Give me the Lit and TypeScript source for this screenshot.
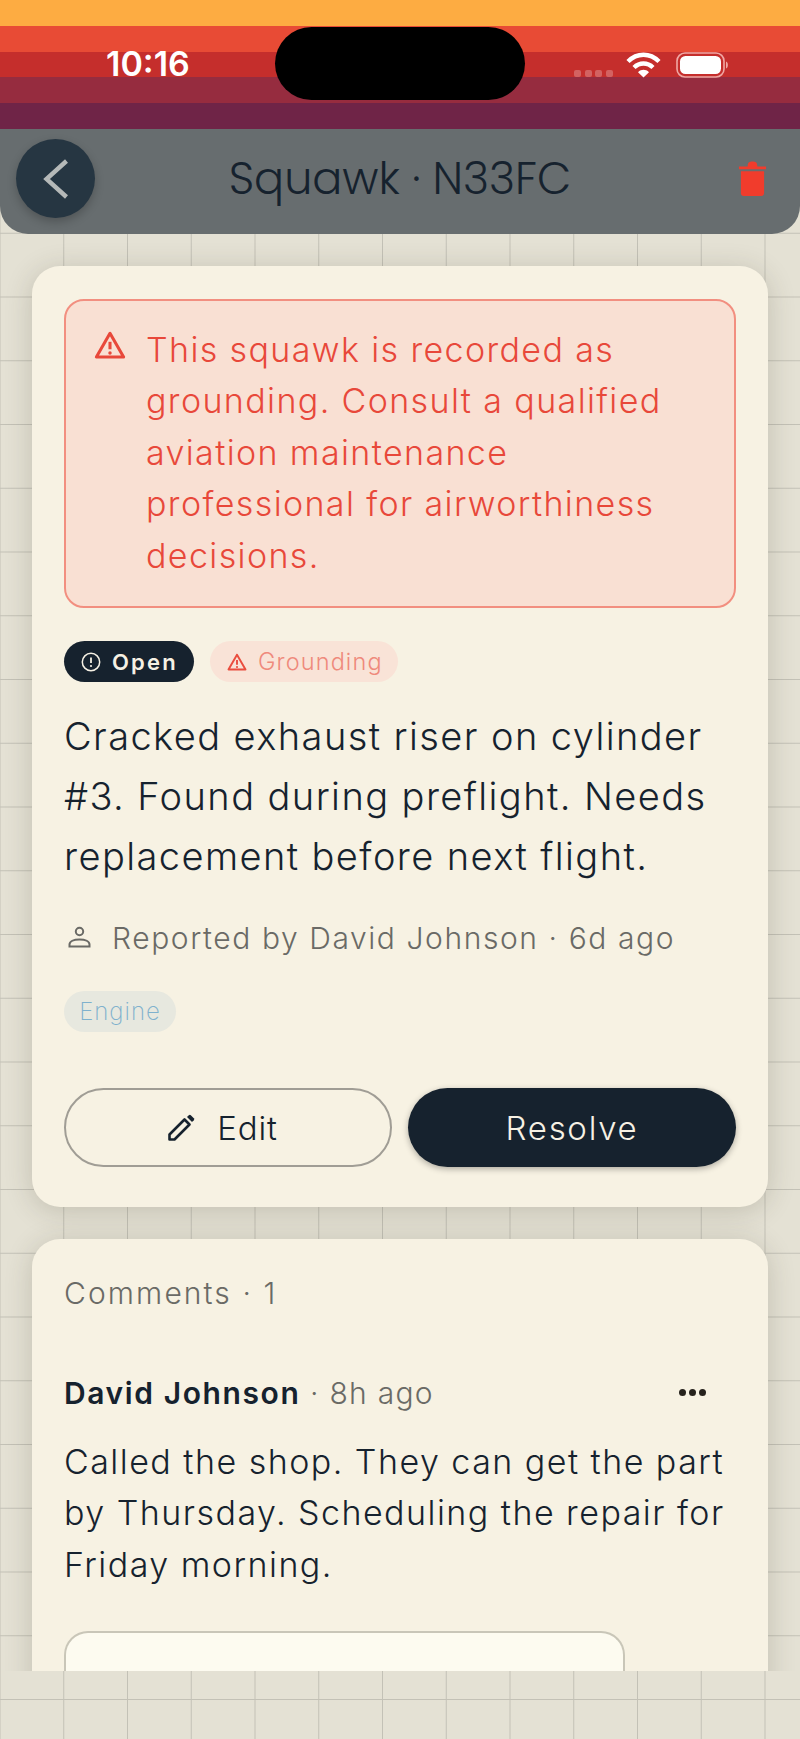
import { LitElement, html, css, svg } from "lit";
import { customElement } from "lit/decorators.js";

const alertTri = (c: string) => svg`<path d="M12 3.2 1.8 21h20.4L12 3.2Z" fill="none" stroke="${c}" stroke-width="2.3" stroke-linejoin="round"/><path d="M12 9.6v5.6" stroke="${c}" stroke-width="2.3"/><circle cx="12" cy="18" r="1.3" fill="${c}"/>`;

@customElement("app-root")
export class AppRoot extends LitElement {
  static styles = css`
    :host { display: block; width: 800px; height: 1739px; overflow: hidden; font-family: Inter, "Liberation Sans", sans-serif; }
    .page {
      position: relative; height: 1739px; display: flex; flex-direction: column; overflow: hidden;
      background-color: #e4e1d4;
      background-image:
        linear-gradient(to right, #c3c1b6 1px, transparent 1px),
        linear-gradient(to bottom, #c3c1b6 1px, transparent 1px);
      background-size: 63.75px 63.75px;
      background-position: -0.5px 41.5px;
    }
    .stripes { height: 129px; flex: none; display: flex; flex-direction: column; }
    .stripes div { flex: 1; }
    .s1 { background: #fdac42; } .s2 { background: #e84b35; } .s3 { background: #c52e2c; }
    .s4 { background: #962c3f; } .s5 { background: #6f2447; }
    .status { position: absolute; inset: 0 0 auto 0; height: 129px; }
    .time { position: absolute; left: 106px; top: 44px; color: #fff; font: 600 34px/40px Inter, sans-serif; }
    .island { position: absolute; left: 275px; top: 27px; width: 250px; height: 73px; border-radius: 37px; background: #000; }
    .dots { position: absolute; left: 574px; top: 70px; display: flex; gap: 3.5px; }
    .dots i { width: 7px; height: 7px; border-radius: 2px; background: rgba(255,255,255,.25); }
    .wifi { position: absolute; left: 626px; top: 51px; }
    .batt { position: absolute; left: 676px; top: 52px; }
    .header {
      flex: none; height: 105px; background: #676d6f; border-radius: 0 0 28px 28px; display: flex; align-items: center;
      justify-content: space-between; padding: 0 33px 6px 16px; box-sizing: border-box; position: relative; z-index: 2;
    }
    .back {
      width: 79px; height: 79px; border-radius: 50%; background: #263642; display: flex; align-items: center; justify-content: center;
      box-shadow: 0 4px 10px rgba(0,0,0,.22);
    }
    .title { position: absolute; left: 0; right: 0; text-align: center; top: 20px; font: 300 44.500px/60px Poppins, Inter, sans-serif; color: #16222e; }
    .trash { position: relative; }
    .scroll { height: 1437px; flex: none; overflow: hidden; padding: 32px 32px 0; box-sizing: border-box; display: flex; flex-direction: column; gap: 32px; }
    .card { background: #f7f2e3; border-radius: 28px; padding: 33px 32px 40px; box-shadow: 0 4px 28px rgba(60,55,35,.2); flex: none; }
    .alert {
      background: #f9e0d3; border: 2px solid #f28f80; border-radius: 20px; padding: 23px 24px 25px 28px;
      display: flex; gap: 20px; color: #e8483a; font-size: 34px; font-weight: 260; line-height: 51.4px; letter-spacing: 1.38px; height: 309px; box-sizing: border-box;
    }
    .alert svg { flex: none; margin-top: 5px; }
    .chips { display: flex; gap: 16px; margin-top: 33px; }
    .chip { height: 41px; border-radius: 21px; display: flex; align-items: center; box-sizing: border-box; }
    .open { width: 130px; background: #16222e; color: #f6f1e4; font-size: 22px; font-weight: 600; padding-left: 17px; gap: 11px; letter-spacing: 2.2px; }
    .grounding { width: 188px; background: #f9e3d7; color: #ef8a7c; font-size: 23.500px; font-weight: 260; padding-left: 17px; gap: 11px; letter-spacing: 1.1px; }
    .body { margin-top: 24px; font-size: 38px; line-height: 60px; font-weight: 260; color: #16222e; letter-spacing: 1.42px; }
    .meta { margin-top: 28px; display: flex; align-items: center; gap: 21px; padding-left: 4px; height: 48px; font-size: 30px; font-weight: 290; color: #6a6a66; letter-spacing: 1.58px; }
    .tag { margin-top: 29px; width: 112px; height: 41px; border-radius: 21px; background: #e7e8df; color: #7fb1cd; display: flex; align-items: center; justify-content: center; font-size: 24px; font-weight: 250; letter-spacing: 1px; }
    .actions { margin-top: 56px; display: grid; grid-template-columns: 328px 328px; gap: 16px; }
    .btn { height: 79px; border-radius: 40px; display: flex; align-items: center; justify-content: center; gap: 22px; font-size: 33px; font-weight: 260; letter-spacing: 1.7px; box-sizing: border-box; }
    .edit { border: 2px solid #a09d95; color: #16222e; padding-right: 11px; letter-spacing: .8px; }
    .resolve { background: #16222e; color: #f6f1e4; box-shadow: 0 2px 6px rgba(0,0,0,.3); }
    .card2 { padding: 32px 32px 0; }
    .ctitle { font-size: 30px; font-weight: 270; color: #6a6a66; letter-spacing: 2.1px; line-height: 44px; }
    .crow { margin-top: 56px; display: flex; align-items: center; height: 44px; font-size: 30px; font-weight: 290; color: #6a6a66; letter-spacing: 1.25px; position: relative; }
    .crow b { font-weight: 600; color: #16222e; letter-spacing: 1.6px; }
    .more { position: absolute; left: 615px; top: 18px; display: flex; gap: 3px; }
    .more i { width: 7px; height: 7px; border-radius: 50%; background: #26221c; }
    .ctext { margin-top: 21px; font-size: 34px; font-weight: 260; line-height: 51.4px; color: #16222e; letter-spacing: 1.47px; }
    .field { margin-top: 41px; width: 561px; height: 120px; background: #fdfbf0; border: 2px solid #c9c6b8; border-bottom: 0; border-radius: 24px 24px 0 0; box-sizing: border-box; padding: 25px 34px; font-size: 34px; line-height: 51px; font-weight: 260; color: #26221c; letter-spacing: 1.2px; }
  `;

  render() {
    return html`<div class="page">
      <div class="stripes"><div class="s1"></div><div class="s2"></div><div class="s3"></div><div class="s4"></div><div class="s5"></div></div>
      <div class="status">
        <div class="time">10:16</div>
        <div class="island"></div>
        <div class="dots"><i></i><i></i><i></i><i></i></div>
        <svg class="wifi" width="35" height="27" viewBox="0 0 35 27">
          <path d="M2 10.5C11 1.5 24 1.5 33 10.5" fill="none" stroke="#fff" stroke-width="4.4"/>
          <path d="M8 16.5C13.5 11.2 21.5 11.2 27 16.5" fill="none" stroke="#fff" stroke-width="4.4"/>
          <path d="M12 21.2C15.5 18 19.5 18 23 21.2L17.5 26.5Z" fill="#fff"/>
        </svg>
        <svg class="batt" width="55" height="26" viewBox="0 0 55 26">
          <rect x="1" y="1" width="47" height="24" rx="8" fill="none" stroke="#f0a8a4" stroke-width="1.600"/>
          <rect x="4" y="4" width="41" height="18" rx="5.500" fill="#fff"/>
          <path d="M50 9.500c2.500.8 2.500 6.200 0 7Z" fill="#f0a8a4"/>
        </svg>
      </div>
      <div class="header">
        <div class="back">
          <svg width="26" height="42" viewBox="0 0 26 42"><path d="M23.500 3 3.500 21l20 18" fill="none" stroke="#b5b9b8" stroke-width="4.400"/></svg>
        </div>
        <div class="title">Squawk · N33FC</div>
        <svg class="trash" width="29" height="37" viewBox="0 0 30 38">
          <path d="M1 6.500h28v3H1zM10 6.500C10 2 12 1.500 15 1.500s5 .5 5 5Z" fill="#f13c2c"/>
          <path d="M3 11.500h24V34a3 3 0 0 1-3 3H6a3 3 0 0 1-3-3Z" fill="#f13c2c"/>
        </svg>
      </div>
      <div class="scroll">
        <div class="card">
          <div class="alert">
            <svg width="32" height="32" viewBox="0 0 24 24">${alertTri("#e8483a")}</svg>
            <div>This squawk is recorded as grounding. Consult a qualified aviation maintenance professional for airworthiness decisions.</div>
          </div>
          <div class="chips">
            <div class="chip open">
              <svg width="20" height="20" viewBox="0 0 20 20"><circle cx="10" cy="10" r="8.700" fill="none" stroke="#f6f1e4" stroke-width="1.500"/><path d="M10 5.500v5.500" stroke="#f6f1e4" stroke-width="1.800"/><circle cx="10" cy="14" r="1.100" fill="#f6f1e4"/></svg>
              <span>Open</span>
            </div>
            <div class="chip grounding">
              <svg width="20" height="20" viewBox="0 0 24 24">${alertTri("#ea4d3e")}</svg>
              <span>Grounding</span>
            </div>
          </div>
          <div class="body">Cracked exhaust riser on cylinder #3. Found during preflight. Needs replacement before next flight.</div>
          <div class="meta">
            <svg width="23" height="24" viewBox="0 0 23 24"><circle cx="11.500" cy="5.500" r="3.700" fill="none" stroke="#6a6a66" stroke-width="2"/><path d="M1.500 20.500v-2c0-3 4-5 10-5s10 2 10 5v2Z" fill="none" stroke="#6a6a66" stroke-width="2"/></svg>
            <span>Reported by David Johnson · 6d ago</span>
          </div>
          <div class="tag">Engine</div>
          <div class="actions">
            <div class="btn edit">
              <svg width="28" height="28" viewBox="0 0 28 28"><path d="M2.500 25.500v-5L17.500 5.500l5 5-15 15Z" fill="none" stroke="#16222e" stroke-width="2.600" stroke-linejoin="round"/><path d="M20 3l1.800-1.800a1.500 1.500 0 0 1 2 0l3 3a1.500 1.500 0 0 1 0 2L25 8Z" fill="#16222e"/></svg>
              <span>Edit</span>
            </div>
            <div class="btn resolve">Resolve</div>
          </div>
        </div>
        <div class="card card2">
          <div class="ctitle">Comments · 1</div>
          <div class="crow"><b>David Johnson</b><span>&nbsp;· 8h ago</span><div class="more"><i></i><i></i><i></i></div></div>
          <div class="ctext">Called the shop. They can get the part by Thursday. Scheduling the repair for Friday morning.</div>
          <div class="field">Add a comment</div>
        </div>
      </div>
    </div>`;
  }
}
